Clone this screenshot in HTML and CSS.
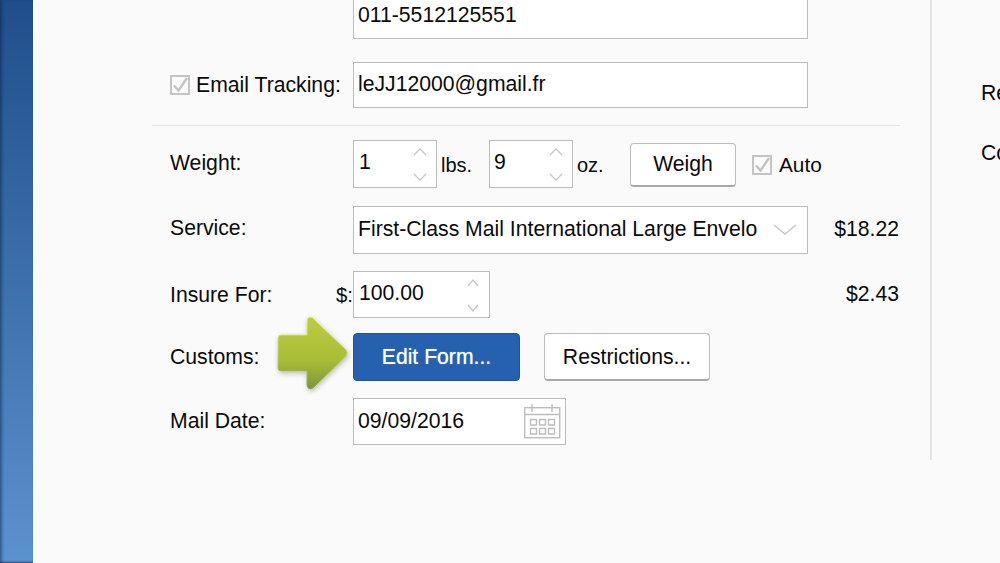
FILE: index.html
```html
<!DOCTYPE html>
<html lang="en">
<head>
<meta charset="utf-8">
<title>Shipping form</title>
<link rel="stylesheet" href="styles.css">
</head>
<body>
<div class="app">
  <aside class="sidebar"></aside>
  <main class="form">
    <div class="row row-phone">
      <div class="field field-full field-cut"><span>011-5512125551</span></div>
    </div>
    <div class="row row-email">
      <div class="label label-check">
        <span class="check"><svg viewBox="0 0 20 20" width="20" height="20"><path d="M4 10.5l4.5 5L17 3" fill="none" stroke="#c4c4c4" stroke-width="2.4"/></svg></span>
        <span>Email Tracking:</span>
      </div>
      <div class="field field-full field-email"><span>leJJ12000@gmail.fr</span></div>
    </div>
    <hr class="rule">
    <div class="row row-weight">
      <div class="label">Weight:</div>
      <div class="field field-spin field-small">
        <span class="val-up">1</span>
        <svg class="spin" viewBox="0 0 14 34" width="14" height="34"><path d="M1 8l6-6 6 6M1 27l6 6 6-6" fill="none" stroke="#c8c8c8" stroke-width="1.4"/></svg>
      </div>
      <span class="unit unit-lbs">lbs.</span>
      <div class="field field-spin field-small">
        <span class="val-oz">9</span>
        <svg class="spin" viewBox="0 0 14 34" width="14" height="34"><path d="M1 8l6-6 6 6M1 27l6 6 6-6" fill="none" stroke="#c8c8c8" stroke-width="1.4"/></svg>
      </div>
      <span class="unit unit-oz">oz.</span>
      <button class="btn btn-weigh">Weigh</button>
      <span class="check check-auto"><svg viewBox="0 0 20 20" width="20" height="20"><path d="M4 10.5l4.5 5L17 3" fill="none" stroke="#c4c4c4" stroke-width="2.4"/></svg></span>
      <span class="auto">Auto</span>
    </div>
    <div class="row row-service">
      <div class="label label-service">Service:</div>
      <div class="field field-full field-select">
        <span>First-Class Mail International Large Envelo</span>
        <svg class="chev" viewBox="0 0 24 11" width="24" height="11"><path d="M1 1l11 9L23 1" fill="none" stroke="#c8c8c8" stroke-width="1.5"/></svg>
      </div>
      <span class="price">$18.22</span>
    </div>
    <div class="row row-insure">
      <div class="label label-insure"><span>Insure For:</span><span class="dollar">$:</span></div>
      <div class="field field-spin field-insure">
        <span class="val-insure">100.00</span>
        <svg class="spin" viewBox="0 0 14 34" width="14" height="34"><path d="M2 8l5-6 5 6M2 27l5 6 5-6" fill="none" stroke="#c8c8c8" stroke-width="1.4"/></svg>
      </div>
      <span class="price price-insure">$2.43</span>
    </div>
    <div class="row row-customs">
      <div class="label label-customs">Customs:</div>
      <button class="btn btn-primary">Edit Form...</button>
      <button class="btn btn-restrict">Restrictions...</button>
      <svg class="arrow" viewBox="0 0 78 82" width="78" height="82">
        <defs>
          <linearGradient id="arrowFill" x1="0" y1="0" x2="0" y2="1">
            <stop offset="0" stop-color="#bccd40"/>
            <stop offset="0.6" stop-color="#a9bd37"/>
            <stop offset="1" stop-color="#7c9539"/>
          </linearGradient>
          <linearGradient id="arrowRim" x1="0" y1="0" x2="0" y2="1">
            <stop offset="0" stop-color="#e4eca0"/>
            <stop offset="0.5" stop-color="#c8d66a"/>
            <stop offset="1" stop-color="#8ba344"/>
          </linearGradient>
          <filter id="arrowShadow" x="-20%" y="-20%" width="140%" height="140%">
            <feDropShadow dx="1" dy="2" stdDeviation="2.5" flood-color="#000" flood-opacity="0.25"/>
          </filter>
        </defs>
        <path d="M4 24a3 3 0 0 1 3-3H33V7q0-4 3-4t4 2L72 36q2.5 3 0 6L40 73q-2 2-4 2t-3-4V57H7a3 3 0 0 1-3-3z" fill="url(#arrowFill)" stroke="url(#arrowRim)" stroke-width="1" filter="url(#arrowShadow)"/>
      </svg>
    </div>
    <div class="row row-date">
      <div class="label">Mail Date:</div>
      <div class="field field-date">
        <span>09/09/2016</span>
        <svg class="cal" viewBox="0 0 38 38" width="38" height="38" fill="none" stroke="#bdbdbd" stroke-width="1.4">
          <rect x="0.7" y="3.7" width="35" height="30"/>
          <path d="M1 10.5h35M8 0v8M28 0v8"/>
          <path d="M6.5 15.5h6v5.5h-6zM15.5 15.5h6v5.5h-6zM24.5 15.5h6v5.5h-6zM6.5 24.5h6v5.5h-6zM15.5 24.5h6v5.5h-6zM24.5 24.5h6v5.5h-6z"/>
        </svg>
      </div>
    </div>
  </main>
  <section class="side">
    <p class="side-a">Re</p>
    <p class="side-b">Co</p>
  </section>
</div>
</body>
</html>
```
FILE: styles.css
```css
* { box-sizing: border-box; }
html, body { margin: 0; height: 100%; overflow: hidden; }
body {
  background: #fafafa;
  color: #0a0a0a;
  font-family: "Liberation Sans", Arial, sans-serif;
  font-size: 21.2px;
}
.app { display: flex; width: 1000px; height: 563px; align-items: flex-start; overflow: hidden; }
.sidebar {
  flex: none;
  width: 33px;
  height: 563px;
  background: linear-gradient(#1f4e8b, #5a92cf);
  box-shadow: inset 3px 0 3px -1px rgba(10, 30, 70, .45), inset 0 -2px 2px -1px rgba(10, 30, 70, .6), 2px 0 2px #fff;
}
.form { flex: none; width: 748px; margin-left: 119px; }
.row { display: flex; align-items: center; padding-left: 18px; }
.label { flex: none; width: 183px; padding-bottom: 2px; }
.label-service { padding-bottom: 4px; }
.label-customs { padding-bottom: 0; }
.field {
  flex: none;
  display: flex;
  align-items: center;
  background: #fff;
  border: 1px solid #bcbcbc;
  padding-left: 4px;
}
.field-full { width: 455px; height: 46px; }
.field-cut { height: 39px; border-top: 0; margin-left: 183px; padding-bottom: 8px; }
.row-email { margin-top: 23px; }
.field-email { height: 46px; padding-bottom: 2px; }
.label-check { display: flex; align-items: center; gap: 6px; padding-bottom: 1px; }
.check {
  flex: none;
  display: block;
  width: 20px;
  height: 20px;
  border: 2px solid #c4c4c4;
}
.check svg { display: block; margin: -2px; }
.rule { margin: 17px 0 0; border: 0; height: 1px; background: #e6e6e6; }
.row-weight { margin-top: 14px; }
.field-spin { justify-content: space-between; height: 48px; padding-right: 9px; }
.field-small { width: 84px; }
.val-up { padding-bottom: 4px; padding-left: 1px; }
.val-oz { padding-bottom: 4px; }
.val-insure { padding-bottom: 3px; padding-left: 1px; }
.spin { display: block; }
.unit { flex: none; padding-top: 2px; font-size: 20px; }
.unit-lbs { width: 52px; padding-left: 4px; }
.unit-oz { width: 57px; padding-left: 4px; }
.btn {
  flex: none;
  font: inherit;
  color: #0a0a0a;
  background: #fff;
  border: 1px solid #bdbdbd;
  border-bottom: 2px solid #a9a9a9;
  border-radius: 4px;
  padding: 0;
}
.btn-weigh { width: 106px; height: 44px; margin-top: 2px; padding-bottom: 2px; }
.check-auto { margin: 2px 0 0 16px; }
.auto { margin: 2px 0 0 7px; font-size: 20.8px; }
.row-service { margin-top: 18px; }
.field-select { height: 48px; justify-content: space-between; padding-right: 10px; }
.field-select span { padding-bottom: 3px; }
.chev { display: block; margin-bottom: 2px; }
.price { flex: 1; text-align: right; padding-right: 1px; padding-bottom: 3px; }
.row-insure { margin-top: 17px; }
.label-insure { display: flex; justify-content: space-between; padding-bottom: 0; }
.dollar { font-size: 20.4px; padding-top: 1px; }
.field-insure { width: 137px; height: 47px; }
.price-insure { padding-bottom: 2px; }
.row-customs { position: relative; margin-top: 15px; }
.btn-primary {
  width: 167px;
  height: 48px;
  color: #fff;
  background: #2561ae;
  border: 1px solid #1b54a4;
  border-radius: 4px;
  text-shadow: 0 0 1px rgba(255, 255, 255, .7);
}
.btn-restrict { width: 166px; height: 48px; margin-left: 24px; }
.arrow { position: absolute; left: 122px; top: -19px; }
.row-date { margin-top: 17px; }
.field-date { width: 213px; height: 47px; justify-content: space-between; padding-right: 3px; }
.field-date > span { padding-bottom: 2px; }
.cal { display: block; margin-top: 2px; }
.side {
  flex: none;
  width: 70px;
  height: 460px;
  margin-left: 30px;
  padding: 81px 0 0 49px;
  border-left: 2px solid #e3e3e3;
  overflow: hidden;
}
.side p { margin: 0; line-height: 24px; }
.side .side-b { margin-top: 36px; }
```
